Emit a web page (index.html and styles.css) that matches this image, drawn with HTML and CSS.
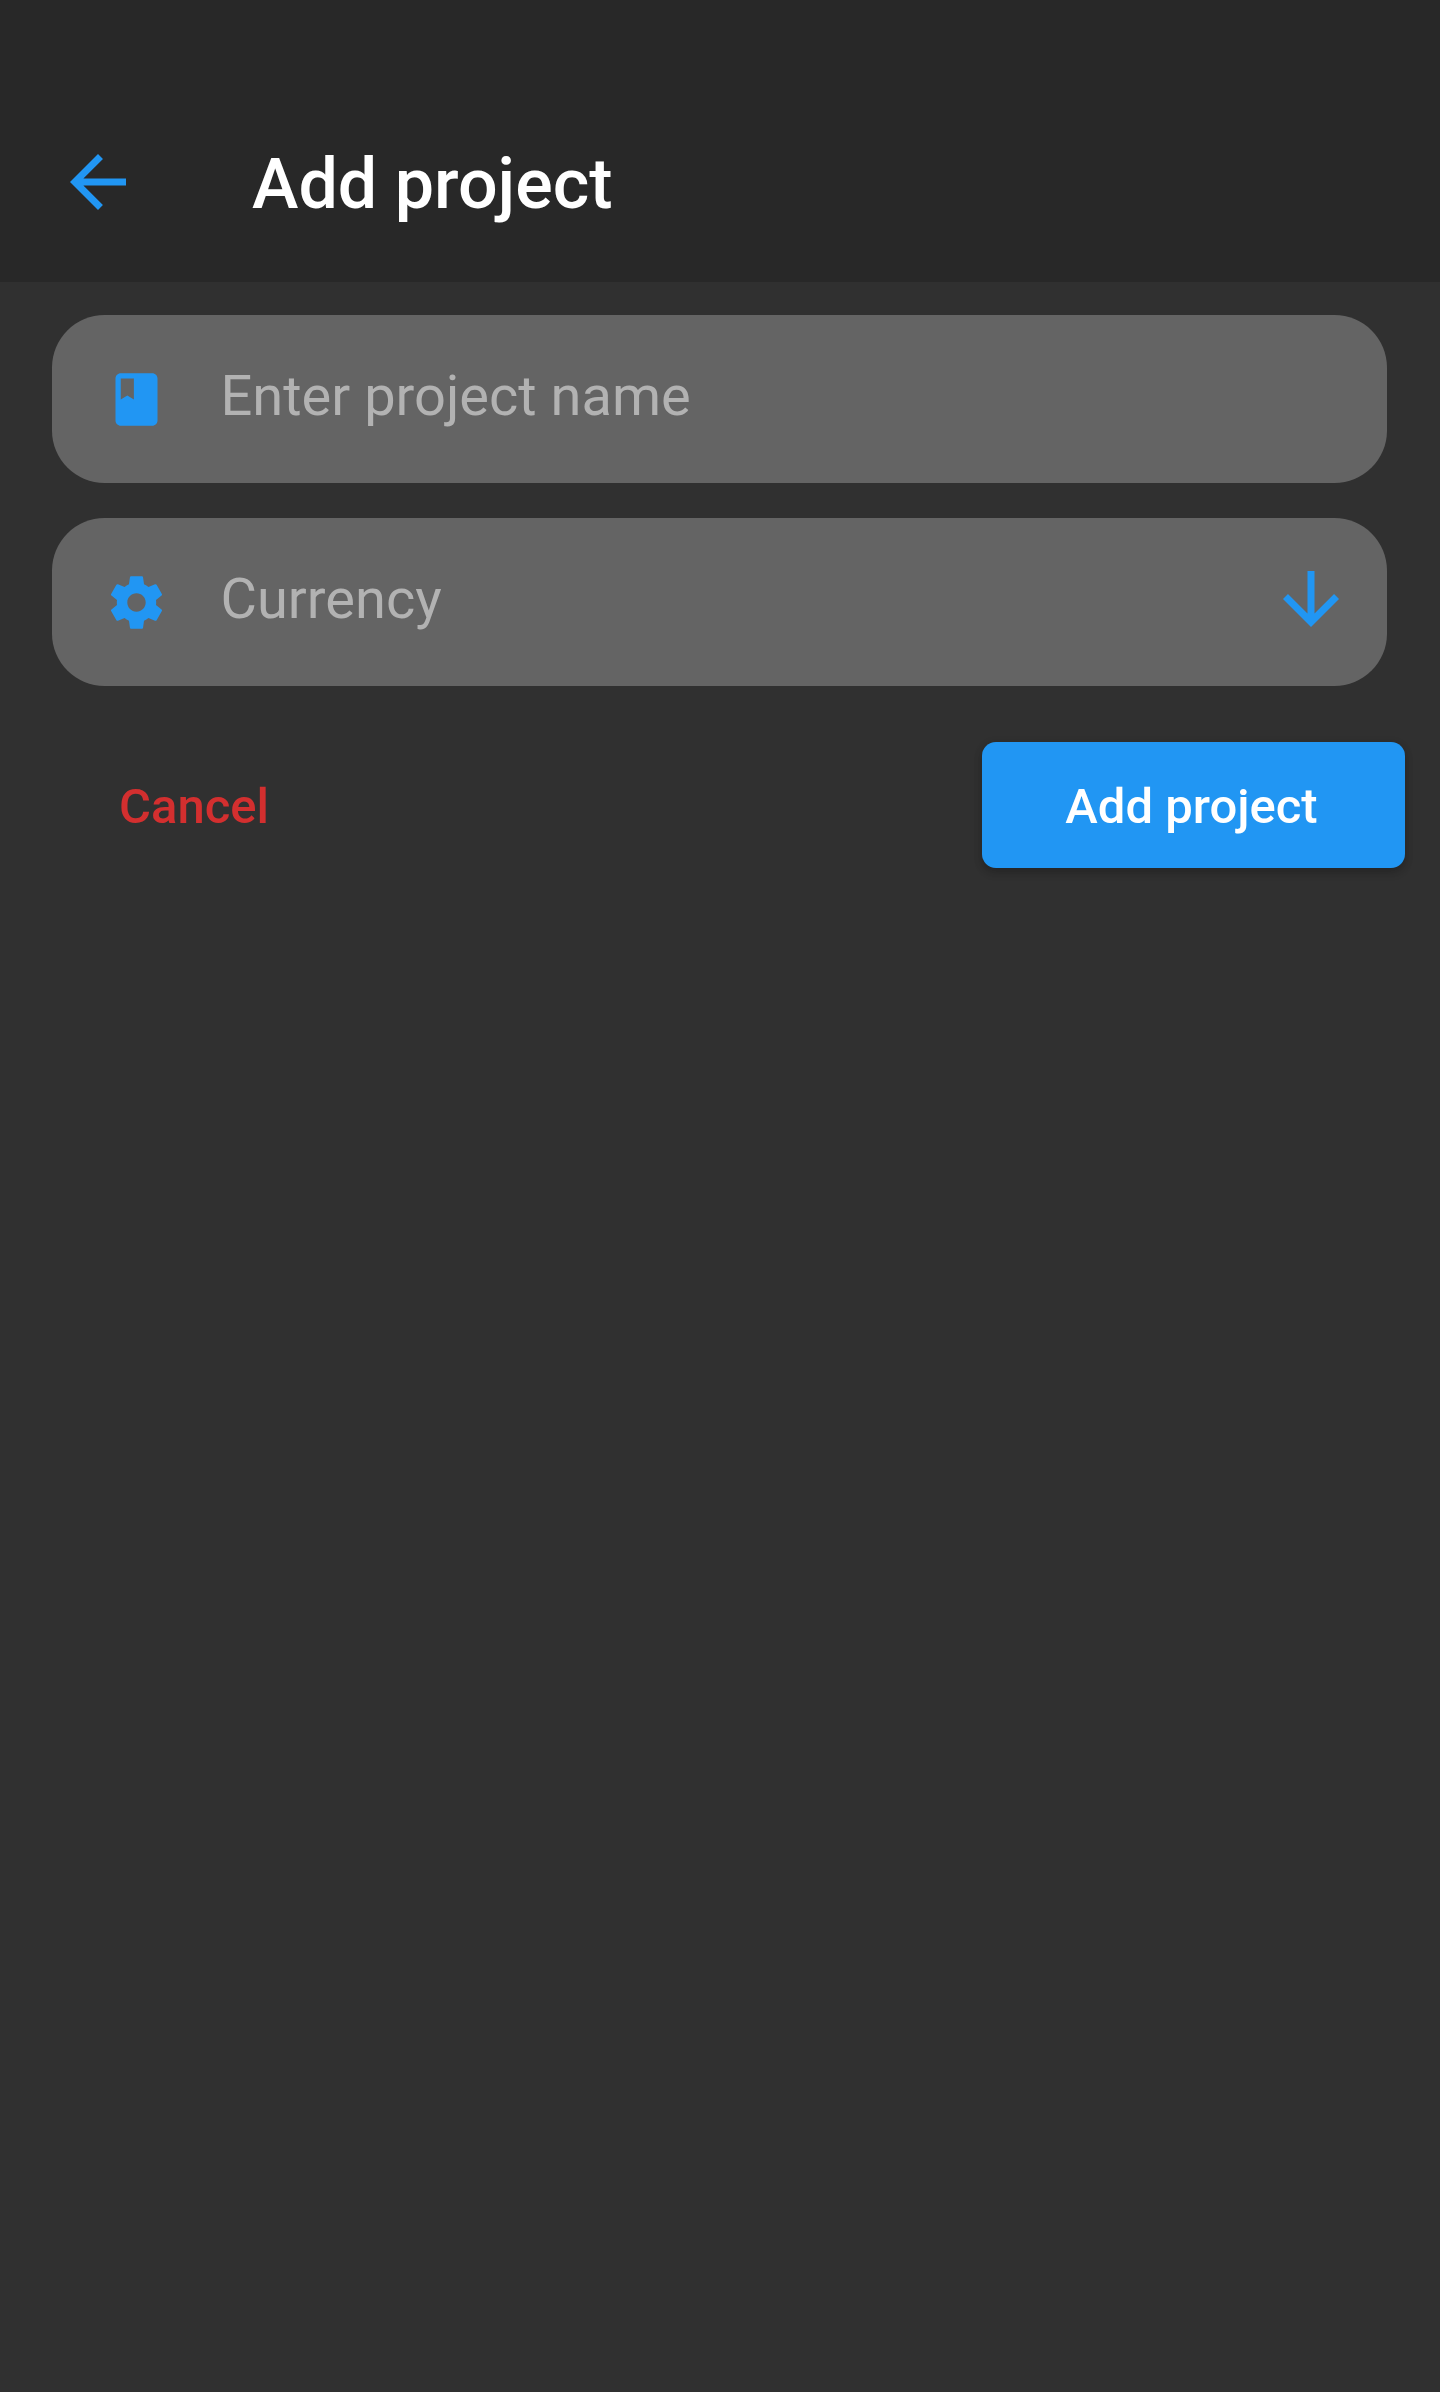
FILE: index.html
```html
<!DOCTYPE html>
<html lang="en">
<head>
<meta charset="utf-8">
<title>Add project</title>
<link rel="stylesheet" href="styles.css">
</head>
<body>
<header class="app-bar">
  <svg class="icon icon-back" viewBox="0 0 24 24"><path d="M20 11H7.83l5.59-5.59L12 4l-8 8 8 8 1.41-1.41L7.83 13H20v-2z"/></svg>
  <h1 class="title">Add project</h1>
</header>
<main class="form">
  <div class="field">
    <svg class="icon icon-lead" viewBox="0 0 24 24"><path d="M18 2H6c-1.100 0-2 .9-2 2v16c0 1.100.9 2 2 2h12c1.100 0 2-.9 2-2V4c0-1.100-.9-2-2-2zM6 4h5v8l-2.500-1.500L6 12V4z"/></svg>
    <span class="hint">Enter project name</span>
  </div>
  <div class="field">
    <svg class="icon icon-lead" viewBox="0 0 24 24"><path d="M19.43 12.98c.04-.32.07-.64.07-.98s-.03-.66-.07-.98l2.11-1.65c.19-.15.24-.42.12-.64l-2-3.46c-.12-.22-.39-.3-.61-.22l-2.49 1c-.52-.4-1.08-.73-1.69-.98l-.38-2.65C14.46 2.18 14.25 2 14 2h-4c-.25 0-.46.18-.49.42l-.38 2.65c-.61.25-1.17.59-1.69.98l-2.49-1c-.23-.09-.49 0-.61.22l-2 3.46c-.13.22-.07.49.12.64l2.11 1.65c-.04.32-.07.65-.07.98s.03.66.07.98l-2.11 1.65c-.19.15-.24.42-.12.64l2 3.46c.12.22.39.3.61.22l2.49-1c.52.4 1.08.73 1.69.98l.38 2.65c.03.24.24.42.49.42h4c.25 0 .46-.18.49-.42l.38-2.65c.61-.25 1.17-.59 1.69-.98l2.49 1c.23.09.49 0 .61-.22l2-3.46c.12-.22.07-.49-.12-.64l-2.11-1.65zM12 15.5c-1.93 0-3.5-1.57-3.5-3.5s1.57-3.5 3.5-3.5 3.5 1.57 3.5 3.5-1.57 3.5-3.5 3.5z"/></svg>
    <span class="hint">Currency</span>
    <svg class="icon icon-drop" viewBox="0 0 24 24"><path d="M20 12l-1.410-1.410L13 16.170V4h-2v12.170l-5.580-5.590L4 12l8 8 8-8z"/></svg>
  </div>
</main>
<div class="actions">
  <button class="button button-cancel">Cancel</button>
  <button class="button button-submit">Add project</button>
</div>
</body>
</html>
```
FILE: styles.css
```css
* {
  box-sizing: border-box;
}

body {
  margin: 0;
  min-height: 2392px;
  background: #303030;
  font-family: Roboto, "Liberation Sans", sans-serif;
}

.app-bar {
  display: flex;
  align-items: center;
  height: 282px;
  padding: 81px 56px 0;
  gap: 112px;
  background: #282828;
}

.icon {
  flex: none;
  fill: #2196f3;
}

.icon-back,
.icon-drop {
  width: 84px;
  height: 84px;
}

.icon-lead {
  width: 63px;
  height: 63px;
}

.title {
  margin: 4px 0 0;
  color: #fff;
  font-size: 70px;
  font-weight: 500;
  line-height: 84px;
}

.form {
  display: grid;
  gap: 35px;
  padding: 33px 53px 0 52px;
}

.field {
  display: flex;
  align-items: center;
  height: 168px;
  padding: 0 34px 0 53px;
  border-radius: 52.5px;
  background: #646464;
}

.hint {
  flex: 1;
  margin: -6px 0 0 52.5px;
  color: #b2b2b2;
  font-size: 56px;
  line-height: 66px;
}

.icon-drop {
  margin-top: -6px;
}

.actions {
  display: flex;
  justify-content: space-between;
  padding: 56px 35px 0;
}

.button {
  height: 126px;
  padding: 3px 84px 0;
  border: 0;
  border-radius: 14px;
  font-family: inherit;
  font-size: 49px;
  font-weight: 500;
  line-height: 58px;
  white-space: nowrap;
}

.button-cancel {
  background: transparent;
  color: #d32f2f;
}

.button-submit {
  width: 423px;
  padding-right: 4px;
  padding-left: 0;
  background: #2196f3;
  color: #fff;
  box-shadow: 0 5px 8px rgba(0, 0, 0, 0.15), 0 2px 10px rgba(0, 0, 0, 0.12);
}
```
